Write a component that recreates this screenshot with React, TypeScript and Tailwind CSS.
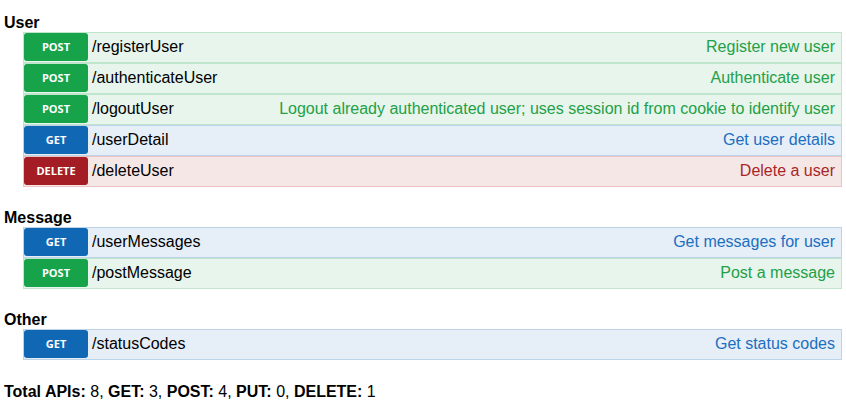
type Method = "GET" | "POST" | "PUT" | "DELETE";

type Api = { method: Method; path: string; desc: string };

const sections: { title: string; apis: Api[] }[] = [
  {
    title: "User",
    apis: [
      { method: "POST", path: "/registerUser", desc: "Register new user" },
      { method: "POST", path: "/authenticateUser", desc: "Authenticate user" },
      {
        method: "POST",
        path: "/logoutUser",
        desc: "Logout already authenticated user; uses session id from cookie to identify user",
      },
      { method: "GET", path: "/userDetail", desc: "Get user details" },
      { method: "DELETE", path: "/deleteUser", desc: "Delete a user" },
    ],
  },
  {
    title: "Message",
    apis: [
      { method: "GET", path: "/userMessages", desc: "Get messages for user" },
      { method: "POST", path: "/postMessage", desc: "Post a message" },
    ],
  },
  {
    title: "Other",
    apis: [{ method: "GET", path: "/statusCodes", desc: "Get status codes" }],
  },
];

const styles: Record<Method, { row: string; badge: string; desc: string }> = {
  POST: {
    row: "bg-[#e7f5ec] border-[#bfe5cc]",
    badge: "bg-[#17a34a]",
    desc: "text-[#23a047]",
  },
  GET: {
    row: "bg-[#e6eef7] border-[#bcd3e8]",
    badge: "bg-[#1068b4]",
    desc: "text-[#1a6fc1]",
  },
  PUT: {
    row: "bg-[#fbf1e4] border-[#efd3ad]",
    badge: "bg-[#d98a1c]",
    desc: "text-[#c07414]",
  },
  DELETE: {
    row: "bg-[#f6e7e7] border-[#ebc3c3]",
    badge: "bg-[#a51d24]",
    desc: "text-[#a82626]",
  },
};

function ApiRow({ api }: { api: Api }) {
  const s = styles[api.method];
  return (
    <div className={`flex items-center h-[31px] border pb-px ${s.row}`}>
      <span
        className={`w-16 h-[28px] shrink-0 rounded-[3px] flex items-center justify-center text-white text-[11px] font-bold font-['Open_Sans',sans-serif] ${s.badge}`}
      >
        {api.method}
      </span>
      <span className="ml-[4px] text-black">{api.path}</span>
      <span className={`ml-auto pr-[6px] ${s.desc}`}>{api.desc}</span>
    </div>
  );
}

export default function App() {
  const all = sections.flatMap((s) => s.apis);
  const count = (m: Method) => all.filter((a) => a.method === m).length;

  return (
    <div className="min-h-screen bg-white pl-[4px] pr-[4px] pt-[12px] font-['Liberation_Sans',Arial,sans-serif] text-base">
      {sections.map((sec) => (
        <div key={sec.title} className="mb-[20px]">
          <h3 className="font-bold leading-[18px] pt-[2px]">{sec.title}</h3>
          <div className="ml-[19px] flex flex-col">
            {sec.apis.map((api) => (
              <ApiRow key={api.path} api={api} />
            ))}
          </div>
        </div>
      ))}
      <p className="mt-[18px]">
        <b>Total APIs:</b> {all.length}, <b>GET:</b> {count("GET")}, <b>POST:</b>{" "}
        {count("POST")}, <b>PUT:</b> {count("PUT")}, <b>DELETE:</b> {count("DELETE")}
      </p>
    </div>
  );
}
